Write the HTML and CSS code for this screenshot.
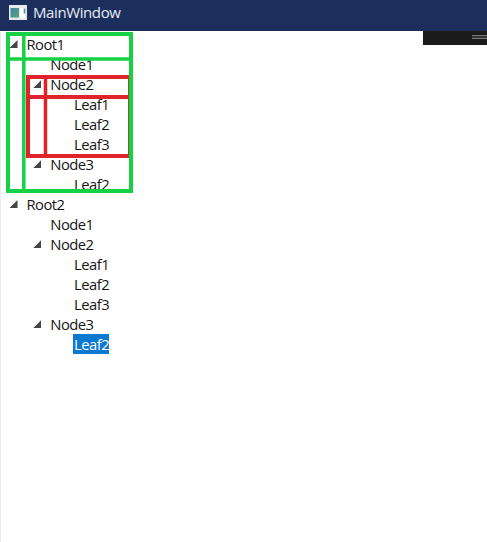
FILE: index.html
```html
<!DOCTYPE html>
<html lang="en">
<head>
<meta charset="utf-8">
<title>MainWindow</title>
<link rel="stylesheet" href="styles.css">
</head>
<body>
<header class="titlebar">
  <svg class="app-icon" width="18" height="15" viewBox="0 0 18 15">
    <defs><linearGradient id="g" x1="0" y1="0" x2="1" y2="1"><stop offset="0" stop-color="#4a7fa8"/><stop offset="1" stop-color="#55a878"/></linearGradient></defs>
    <rect width="18" height="15" fill="#e3e9ec"/>
    <rect x="1.5" y="3" width="8.5" height="9.5" fill="url(#g)"/>
    <rect x="11" y="3" width="5" height="10" fill="#fff"/>
    <rect x="14.7" y="3.5" width="1.6" height="5" fill="#4f9a91"/>
  </svg>
  <h1 class="title">MainWindow</h1>
</header>
<main class="content">
  <div class="toolbar"><span class="grip"></span></div>
  <ul class="tree">
    <li><div class="row"><i class="arrow"></i><span>Root1</span></div>
      <ul>
        <li><div class="row"><span>Node1</span></div></li>
        <li><div class="row"><i class="arrow"></i><span>Node2</span></div>
          <ul>
            <li><div class="row"><span>Leaf1</span></div></li>
            <li><div class="row"><span>Leaf2</span></div></li>
            <li><div class="row"><span>Leaf3</span></div></li>
          </ul>
        </li>
        <li><div class="row"><i class="arrow"></i><span>Node3</span></div>
          <ul><li><div class="row"><span>Leaf2</span></div></li></ul>
        </li>
      </ul>
    </li>
    <li><div class="row"><i class="arrow"></i><span>Root2</span></div>
      <ul>
        <li><div class="row"><span>Node1</span></div></li>
        <li><div class="row"><i class="arrow"></i><span>Node2</span></div>
          <ul>
            <li><div class="row"><span>Leaf1</span></div></li>
            <li><div class="row"><span>Leaf2</span></div></li>
            <li><div class="row"><span>Leaf3</span></div></li>
          </ul>
        </li>
        <li><div class="row"><i class="arrow"></i><span>Node3</span></div>
          <ul><li><div class="row"><span class="selected">Leaf2</span></div></li></ul>
        </li>
      </ul>
    </li>
  </ul>
  <svg class="marks" width="140" height="170" viewBox="0 0 140 170" fill="none">
    <g stroke="#16d046" stroke-width="4">
      <rect x="8" y="3" width="123" height="157"/>
      <path d="M8 28H131" stroke-width="3.6"/>
      <path d="M23.8 2V160" stroke-width="3.5"/>
    </g>
    <g stroke="#e0222b" stroke-width="4">
      <path d="M129 46H28V125H129M27 66H129"/>
      <path d="M45.5 46V125" stroke-width="3.5"/>
      <path d="M128.5 48V127" stroke="#8c5524" stroke-width="1"/>
    </g>
  </svg>
</main>
</body>
</html>
```
FILE: styles.css
```css
* { box-sizing: border-box; }
body {
  margin: 0;
  height: 542px;
  overflow: hidden;
  display: flex;
  flex-direction: column;
  background: #fff;
  color: #161616;
  font-family: "Segoe UI", "Open Sans", sans-serif;
  font-size: 14.8px;
}
.titlebar {
  height: 31px;
  flex: none;
  display: flex;
  align-items: flex-start;
  padding: 5px 0 0 9px;
  background: #1b2e5c;
}
.app-icon { flex: none; }
.title {
  margin: -3px 0 0 6px;
  color: #e8ebf2;
  font-size: 15px;
  font-weight: 400;
  line-height: 20px;
  letter-spacing: -0.4px;
}
.content {
  position: relative;
  flex: 1;
  padding-top: 3px;
  border-left: 1px solid #ececec;
}
.toolbar {
  position: absolute;
  top: 0;
  right: 0;
  width: 64px;
  height: 14px;
  padding: 4px 0 0 49px;
  background: #1b1b1c;
}
.grip {
  display: block;
  height: 4px;
  border: solid #77777a;
  border-width: 1px 0;
  background: #333;
}
.tree, .tree ul { margin: 0; padding: 0; list-style: none; }
.tree { padding-left: 1.5px; }
.tree ul { padding-left: 23.8px; }
.row {
  height: 20px;
  padding-left: 23px;
  position: relative;
  line-height: 20px;
}
.row span { display: inline-block; height: 20px; padding: 0 0 0 1px; vertical-align: top; letter-spacing: -0.55px; }
.arrow {
  position: absolute;
  left: 7px;
  top: 6px;
  width: 8px;
  height: 8px;
  background: #454545;
  clip-path: polygon(100% 0, 100% 100%, 0 100%);
}
.row .selected { background: #0b78d1; color: #fff; }
.marks { position: absolute; top: 0; left: -1px; }
```
